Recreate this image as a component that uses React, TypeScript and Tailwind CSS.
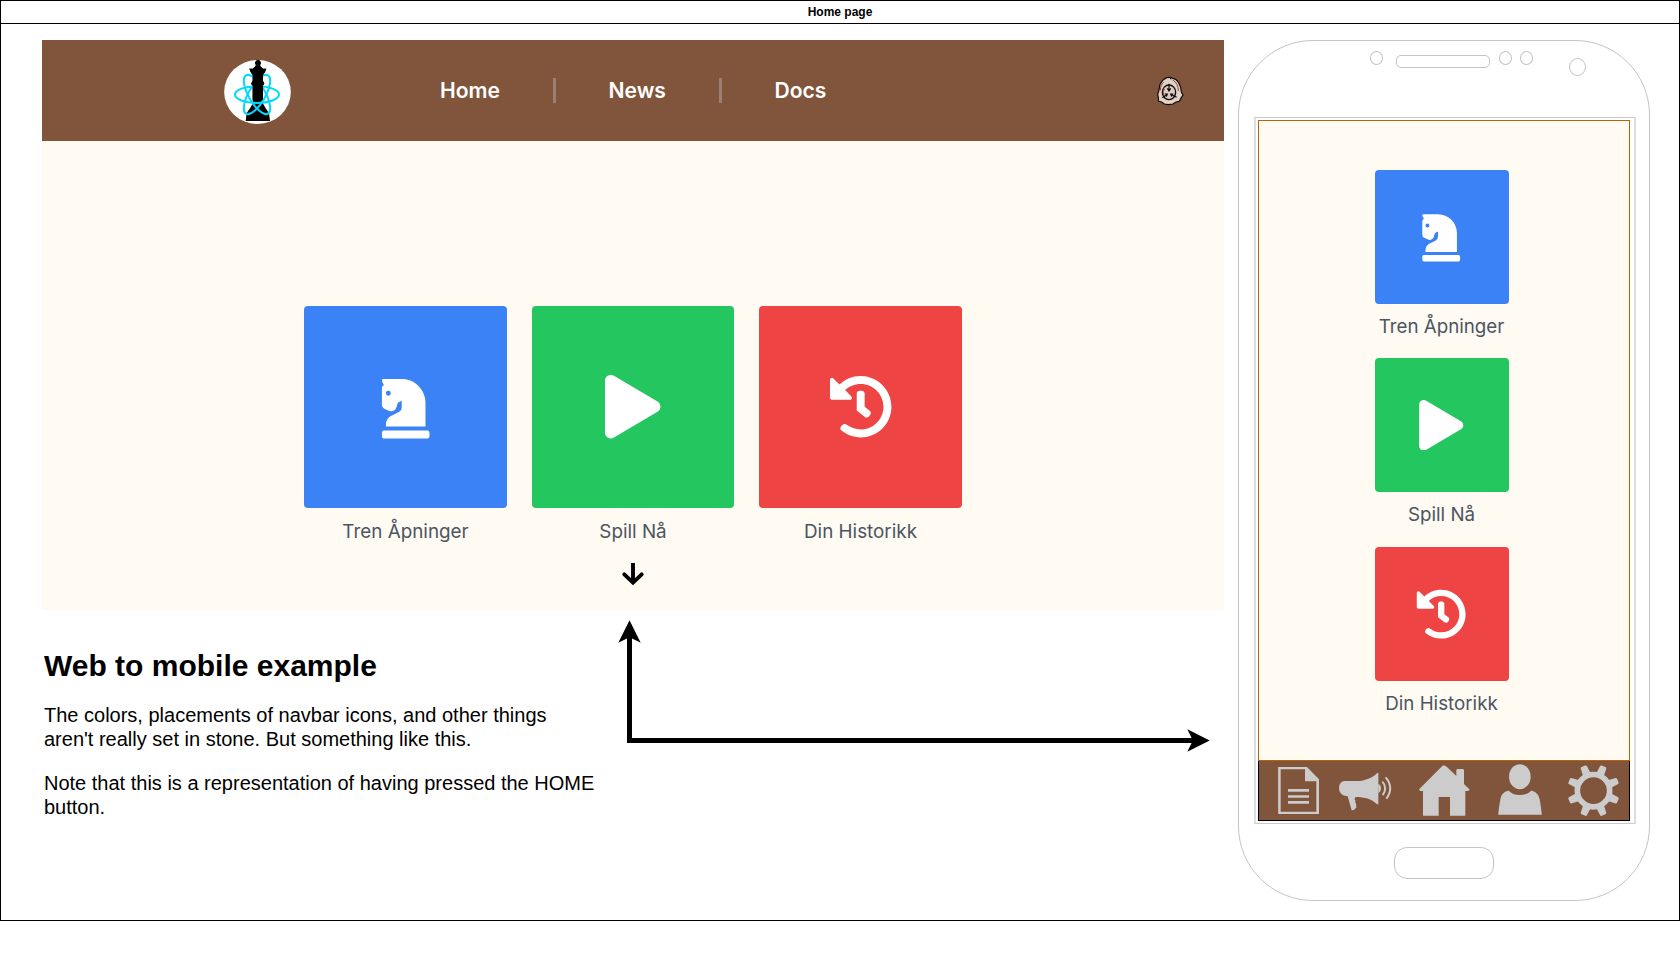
import type { ReactNode } from 'react';
import { FaChessKnight, FaHistory, FaPlay } from 'react-icons/fa';

const tiles = [
  { label: 'Tren Åpninger', color: 'bg-[#3b82f6]', Icon: FaChessKnight },
  { label: 'Spill Nå', color: 'bg-[#24c65f]', Icon: FaPlay },
  { label: 'Din Historikk', color: 'bg-[#ef4444]', Icon: FaHistory },
];

const QUEEN =
  'M143 30a9 9 0 0 1 7 15l2 5 7 6 10 0-4 10-6 9v18l4 8-4 5v54l8 14 10 14 3 24H107l3-24 10-14 8-14v-54l-5-5 5-8V75l-6-9-4-10 10 0 7-6 3-5a9 9 0 0 1 5-15z';

function Logo() {
  return (
    <svg className="h-[64px] w-[67px]" viewBox="42 30 201 191" preserveAspectRatio="none">
      <defs>
        <clipPath id="queen-top">
          <rect x="100" y="28" width="90" height="121" />
        </clipPath>
      </defs>
      <ellipse cx="142.5" cy="125.5" rx="100" ry="95.5" fill="#fff" />
      <path d={QUEEN} />
      <g fill="none" stroke="#00d8ff" strokeWidth="6">
        <ellipse cx="141" cy="133" rx="66" ry="25" />
        <ellipse cx="141" cy="133" rx="66" ry="25" transform="rotate(60 141 133)" />
        <ellipse cx="141" cy="133" rx="66" ry="25" transform="rotate(120 141 133)" />
      </g>
      <path d={QUEEN} clipPath="url(#queen-top)" />
    </svg>
  );
}

function Badge() {
  return (
    <svg className="h-[30px] w-[27px]" viewBox="50 45 81 90">
      <path
        d="M79 50l12-1 5 3 10 3 9 10 6 14 2 14 5 9-5 8-6 11-10 2-9 6-14 2-12-2-8-6-9-2-1-12-2-8 4-14 3-17 8-12z"
        fill="#e2d3c8"
        stroke="#0d0808"
        strokeWidth="3.500"
      />
      <path d="M97 57c11 6 17 17 17 33M60 88c0-11 4-19 10-24" fill="none" stroke="#8f3d42" strokeWidth="3" />
      <ellipse cx="86" cy="94" rx="20" ry="22" fill="#dccbbf" stroke="#0d0808" strokeWidth="4" />
      <path d="M72 84a17 17 0 0 0-2 18" fill="none" stroke="#8f3d42" strokeWidth="3" />
      <path d="M86 68v20M81 82l5 8 5-8M66 110l13-9M73 99l8 0-3 8M109 109l-15-8M99 99l-8 0 3 8" fill="none" stroke="#0d0808" strokeWidth="3.500" />
      <path d="M91 49v6" stroke="#0d0808" strokeWidth="4" />
    </svg>
  );
}

function NavSeparator() {
  return <span className="h-[25px] w-[3px] bg-[#9a7f75]" />;
}

function NavIcon({ className, box, children }: { className: string; box: string; children: ReactNode }) {
  return (
    <svg className={`h-[59px] shrink-0 ${className}`} viewBox={box} fill="#cccccc" preserveAspectRatio="none">
      {children}
    </svg>
  );
}

function PhoneNav() {
  return (
    <nav className="flex h-[60px] border-x border-b border-black bg-[#80553b]">
      <NavIcon className="ml-[19px] w-[42px]" box="144 63 126 177">
        <path fillRule="evenodd" d="M144.500 81H231l36 37V222H144.500zM152 88V215H259V124H225V88z" />
        <path d="M174 147h63v8.500h-63zM174 165.500h63v8h-63zM174 183h63v8h-63z" />
      </NavIcon>
      <NavIcon className="ml-[18px] w-[54px]" box="324 63 162 177">
        <path d="M342 123h46c22-2 39-11 51-21l2-3h4v94h-4l-4-4c-13-11-31-18-60-18l-3 5v4l2 1v7l2 2 1 13-4 3-3 4-7 1-12-42-8-2c-11-1-18-12-18-23 0-12 6-19 15-21z" />
        <path d="M445 131c10 4 11 22 0 28z" />
        <path d="M457 125c11 11 11 29 1 40M467 112c18 21 18 42 2 64" fill="none" stroke="#ccc" strokeWidth="6" />
      </NavIcon>
      <NavIcon className="ml-[26.600px] w-[51px]" box="566 63 153 177">
        <path d="M642 77c3 0 5 1 7 3l29 28V89l3-2h17l3 3v42l16 16v3l-4 2h-8v74h-46v-56h-34v56h-47v-74h-9l-2-3v-3l68-68c2-2 4-3 7-3z" />
      </NavIcon>
      <NavIcon className="ml-[28.500px] w-[44px]" box="804.500 63 132 177">
        <ellipse cx="870" cy="110" rx="32.500" ry="37.500" />
        <path d="M805 224c2-18 4-34 7-48 3-15 12-22 25-24 7 8 18 13 33 13s26-5 34-13c14 2 22 11 25 24 3 14 5 30 7 48z" />
      </NavIcon>
      <NavIcon className="ml-[26px] w-[51px]" box="1014 63 153 177">
        <g transform="translate(1090.500 152)">
          <circle r="48.500" fill="none" stroke="#ccc" strokeWidth="17" />
          {[22.5, 67.5, 112.5, 157.5, 202.5, 247.5, 292.5, 337.5].map((a) => (
            <path key={a} d="M-12-54l2-22q1-3 4-3h12q3 0 4 3l2 22z" transform={`rotate(${a})`} />
          ))}
        </g>
      </NavIcon>
    </nav>
  );
}

function WebPreview() {
  return (
    <section className="flex h-[570px] w-[1182px] flex-col bg-[#fffaf2] font-[Inter,sans-serif]">
      <header className="flex h-[101px] shrink-0 items-center bg-[#80553b] pl-[182px] pr-[40px] text-[21.1px] font-semibold text-white">
        <div className="pt-[2px]">
          <Logo />
        </div>
        <nav className="ml-[149px] flex items-center">
          <span className="w-[113px] pt-px">Home</span>
          <NavSeparator />
          <span className="ml-[52.500px] w-[110.500px] pt-px">News</span>
          <NavSeparator />
          <span className="ml-[52.500px] pt-px">Docs</span>
        </nav>
        <div className="ml-auto">
          <Badge />
        </div>
      </header>
      <div className="flex justify-center gap-[25.300px] pt-[165px]">
        {tiles.map(({ label, color, Icon }) => (
          <div key={label} className="flex w-[202.200px] flex-col items-center">
            <div className={`flex h-[202px] w-full items-center justify-center rounded-[4px] ${color}`}>
              <Icon className="text-white" size={63.4} />
            </div>
            <span className="mt-[10px] text-[18.85px] leading-[28px] text-[#4b5563]">{label}</span>
          </div>
        ))}
      </div>
      <svg className="mt-[17px] h-[24px] w-[24px] self-center" viewBox="0 0 24 24" fill="none" stroke="#000" strokeWidth="3.900">
        <path d="M12 0v20" />
        <path d="M3.300 11.300l8.700 8.300 8.700-8.300" strokeLinecap="round" />
      </svg>
    </section>
  );
}

function Phone() {
  return (
    <section className="ml-[14px] flex h-[861px] w-[412px] flex-col rounded-[75px] border border-[#c4c4c4] font-[Inter,sans-serif]">
      <div className="flex h-[76px] shrink-0 items-start pl-[130.500px]">
        <span className="mt-[10px] h-[14px] w-[13px] rounded-[50%] border border-[#c4c4c4]" />
        <span className="ml-[13px] mt-[14px] h-[13px] w-[94px] rounded-[5px] border border-[#c4c4c4]" />
        <span className="ml-[9px] mt-[10px] h-[14px] w-[13px] rounded-[50%] border border-[#c4c4c4]" />
        <span className="ml-[8px] mt-[10px] h-[14px] w-[13px] rounded-[50%] border border-[#c4c4c4]" />
        <span className="ml-[36px] mt-[17px] h-[18px] w-[17px] rounded-[50%] border border-[#c4c4c4]" />
      </div>
      <div className="ml-[15px] h-[707px] w-[382px] shrink-0 border-x-2 border-y border-x-[#dedede] border-y-[#cacaca] pl-[2px] pt-[2px]">
        <div className="flex w-[372px] flex-col">
          <div className="flex h-[641px] flex-col items-center gap-[17.600px] border border-[#b46504] bg-[#fffaf2] pr-[5px] pt-[48.600px]">
            {tiles.map(({ label, color, Icon }) => (
              <div key={label} className="flex flex-col items-center">
                <div className={`flex h-[134px] w-[134px] items-center justify-center rounded-[4px] ${color}`}>
                  <Icon className="text-white" size={50.4} />
                </div>
                <span className="mt-[9px] text-[18.75px] leading-[28px] text-[#4b5563]">{label}</span>
              </div>
            ))}
          </div>
          <PhoneNav />
        </div>
      </div>
      <div className="ml-[155px] mt-[23px] h-[32px] w-[100px] rounded-[13px] border border-[#c4c4c4]" />
    </section>
  );
}

export default function App() {
  return (
    <div className="h-[957px] w-[1680px] overflow-hidden bg-white font-['Liberation_Sans',Arial,sans-serif] text-black">
      <main className="h-[921px] w-[1680px] border border-black">
        <h1 className="flex h-[23px] items-center justify-center border-b border-black text-[12px] font-bold leading-[14px]">
          Home page
        </h1>
        <div className="flex pl-[41px] pt-[16px]">
          <div className="w-[1182px]">
            <WebPreview />
            <div className="flex">
              <div className="w-[568px] pl-[2px] pt-[38px]">
                <h2 className="text-[30px] font-bold leading-[36px]">Web to mobile example</h2>
                <p className="mt-[19px] text-[20px] leading-[24px]">
                  The colors, placements of navbar icons, and other things
                  <br />
                  aren't really set in stone. But something like this.
                </p>
                <p className="mt-[20px] text-[20px] leading-[24px]">
                  Note that this is a representation of having pressed the HOME
                  <br />
                  button.
                </p>
              </div>
              <svg className="h-[150px] w-[614px]" viewBox="610 610 614 150">
                <path d="M629.500 636V740.500H1194" fill="none" stroke="#000" strokeWidth="5" />
                <path d="M629.500 620.300L640.700 642.700L629.500 637.200L618.300 642.700z" />
                <path d="M1209.700 740.500L1187.300 751.700L1192.800 740.500L1187.300 729.300z" />
              </svg>
            </div>
          </div>
          <Phone />
        </div>
      </main>
    </div>
  );
}
